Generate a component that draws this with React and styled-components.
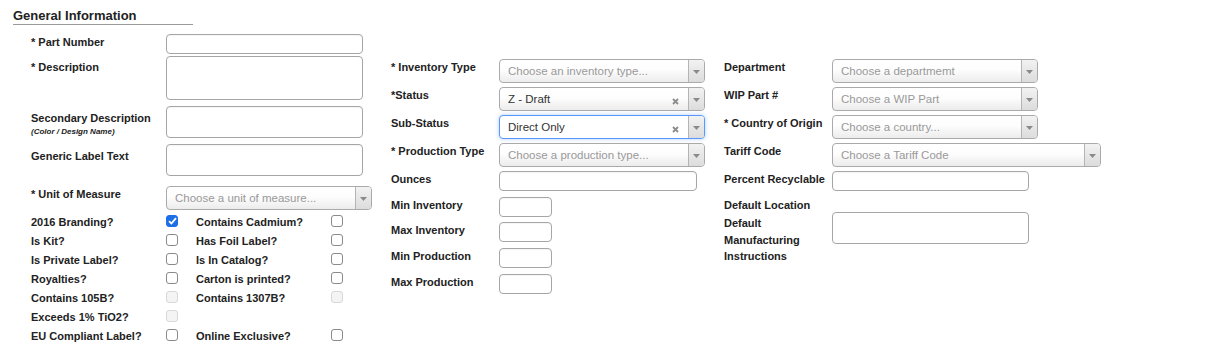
import React from 'react';
import styled, { createGlobalStyle } from 'styled-components';

const GlobalStyle = createGlobalStyle`
  body {
    margin: 0;
    background: #fff;
    font-family: "Liberation Sans", Arial, sans-serif;
    color: #222;
  }
`;

const Wrapper = styled.section`
  padding: 8px 0 0 13px;
`;

const Title = styled.h3`
  margin: 0;
  width: 180px;
  padding-bottom: 1px;
  font-size: 13px;
  line-height: 15px;
  font-weight: bold;
  color: #222;
  border-bottom: 1px solid #9a9a9a;
`;

const Columns = styled.div`
  display: flex;
  margin-top: 9px;
`;

const Column = styled.div`
  flex: ${(p) => (p.$w ? 'none' : 1)};
  width: ${(p) => (p.$w ? `${p.$w}px` : 'auto')};
  margin-left: ${(p) => p.$ml || 0}px;
  padding-top: ${(p) => p.$top || 0}px;
`;

const Row = styled.div`
  display: grid;
  grid-template-columns: ${(p) => p.$label}px auto;
  align-items: start;
  margin-bottom: ${(p) => p.$mb ?? 4}px;
`;

const Label = styled.label`
  display: block;
  padding-top: ${(p) => p.$pt || 0}px;
  padding-right: 6px;
  font-size: 11px;
  line-height: ${(p) => p.$lh || 16}px;
  font-weight: bold;
  color: #222;
`;

const SubLabel = styled.span`
  display: block;
  font-size: 8px;
  line-height: 12px;
  font-style: italic;
`;

const TextInput = styled.input`
  display: block;
  box-sizing: border-box;
  width: ${(p) => p.$w}px;
  height: ${(p) => p.$h || 20}px;
  margin: 0;
  border: 1px solid #a6a6a6;
  border-radius: 4px;
  background: #fff;
  box-shadow: inset 0 1px 1px rgba(0, 0, 0, 0.04);
  font: 11px "Liberation Sans", Arial, sans-serif;
  outline: none;
`;

const TextArea = styled.textarea`
  display: block;
  box-sizing: border-box;
  width: ${(p) => p.$w}px;
  height: ${(p) => p.$h}px;
  margin: 0;
  border: 1px solid #a6a6a6;
  border-radius: 4px;
  background: #fff;
  resize: none;
  font: 11px "Liberation Sans", Arial, sans-serif;
  outline: none;
`;

const SelectBox = styled.div`
  display: flex;
  align-items: stretch;
  box-sizing: border-box;
  width: ${(p) => p.$w}px;
  height: 24px;
  border: 1px solid ${(p) => (p.$focus ? '#5897fb' : '#aaa')};
  border-radius: 4px;
  background: ${(p) =>
    p.$focus ? '#fff' : 'linear-gradient(#fff 0%, #fdfdfd 45%, #ececec 100%)'};
  box-shadow: ${(p) => (p.$focus ? '0 0 4px rgba(88, 151, 251, 0.45)' : 'none')};
  overflow: hidden;
`;

const SelectText = styled.span`
  flex: 1;
  padding-left: 8px;
  font-size: 11.5px;
  line-height: 22px;
  color: ${(p) => (p.$placeholder ? '#999' : '#333')};
  white-space: nowrap;
  overflow: hidden;
`;

const ClearBtn = styled.span`
  display: flex;
  align-items: center;
  justify-content: center;
  width: 10px;
  margin-right: 8px;
  padding-top: 4px;
`;

const ArrowBox = styled.span`
  display: flex;
  align-items: center;
  justify-content: center;
  width: 15px;
  padding-top: 2px;
  border-left: 1px solid #b4b4b4;
  background: linear-gradient(#f2f2f2, #dcdcdc);
`;

const CheckGrid = styled.div`
  display: grid;
  grid-template-columns: 135px 30px 135px 14px;
  grid-auto-rows: 19px;
  align-items: center;
  margin-top: 2px;
`;

const CheckLabel = styled.span`
  font-size: 11px;
  line-height: 16px;
  font-weight: bold;
  color: #222;
`;

const Box = styled.span`
  display: flex;
  align-items: center;
  justify-content: center;
  box-sizing: border-box;
  width: 12px;
  height: 12px;
  margin-top: -2px;
  border: 1px solid ${(p) => (p.$checked ? '#1d6fe8' : p.$disabled ? '#d8d8d8' : '#8a8a8a')};
  border-radius: 3px;
  background: ${(p) => (p.$checked ? '#1d6fe8' : p.$disabled ? '#f4f4f4' : '#fff')};
`;

const Select = ({ w, placeholder, value, clearable, focus }) => (
  <SelectBox $w={w} $focus={focus}>
    <SelectText $placeholder={!value}>{value || placeholder}</SelectText>
    {clearable && (
      <ClearBtn>
        <svg width="7" height="7" viewBox="0 0 7 7">
          <path d="M1 1L6 6M6 1L1 6" stroke="#8c8c8c" strokeWidth="1.8" />
        </svg>
      </ClearBtn>
    )}
    <ArrowBox>
      <svg width="7" height="4" viewBox="0 0 7 4">
        <path d="M0 0H7L3.5 4Z" fill="#8a8a8a" />
      </svg>
    </ArrowBox>
  </SelectBox>
);

const Check = ({ checked, disabled }) => (
  <Box $checked={checked} $disabled={disabled}>
    {checked && (
      <svg width="9" height="8" viewBox="0 0 9 8">
        <path d="M1 4.2L3.4 6.5L8 1.2" stroke="#fff" strokeWidth="1.8" fill="none" />
      </svg>
    )}
  </Box>
);

const checks = [
  ['2016 Branding?', { checked: true }, 'Contains Cadmium?', {}],
  ['Is Kit?', {}, 'Has Foil Label?', {}],
  ['Is Private Label?', {}, 'Is In Catalog?', {}],
  ['Royalties?', {}, 'Carton is printed?', {}],
  ['Contains 105B?', { disabled: true }, 'Contains 1307B?', { disabled: true }],
  ['Exceeds 1% TiO2?', { disabled: true }, null, null],
  ['EU Compliant Label?', {}, 'Online Exclusive?', {}],
];

const App = () => {
  return (
    <Wrapper>
      <GlobalStyle />
      <Title>General Information</Title>
      <Columns>
        <Column $w={360} $ml={18}>
          <Row $label={135} $mb={2}>
            <Label>* Part Number</Label>
            <TextInput $w={197} />
          </Row>
          <Row $label={135} $mb={6}>
            <Label $pt={3}>* Description</Label>
            <TextArea $w={197} $h={44} />
          </Row>
          <Row $label={135} $mb={6}>
            <Label $pt={4}>
              Secondary Description
              <SubLabel>(Color / Design Name)</SubLabel>
            </Label>
            <TextInput $w={197} $h={32} />
          </Row>
          <Row $label={135} $mb={10}>
            <Label $pt={4}>Generic Label Text</Label>
            <TextInput $w={197} $h={32} />
          </Row>
          <Row $label={135} $mb={0}>
            <Label>* Unit of Measure</Label>
            <Select w={206} placeholder="Choose a unit of measure..." />
          </Row>
          <CheckGrid>
            {checks.map(([a, ao, b, bo]) => (
              <React.Fragment key={a}>
                <CheckLabel>{a}</CheckLabel>
                <Check {...ao} />
                {b ? <CheckLabel>{b}</CheckLabel> : <span />}
                {b ? <Check {...bo} /> : <span />}
              </React.Fragment>
            ))}
          </CheckGrid>
        </Column>

        <Column $w={333} $top={25}>
          <Row $label={108}>
            <Label>* Inventory Type</Label>
            <Select w={206} placeholder="Choose an inventory type..." />
          </Row>
          <Row $label={108}>
            <Label>*Status</Label>
            <Select w={206} value="Z - Draft" clearable />
          </Row>
          <Row $label={108}>
            <Label>Sub-Status</Label>
            <Select w={206} value="Direct Only" clearable focus />
          </Row>
          <Row $label={108}>
            <Label>* Production Type</Label>
            <Select w={206} placeholder="Choose a production type..." />
          </Row>
          <Row $label={108} $mb={6}>
            <Label>Ounces</Label>
            <TextInput $w={198} />
          </Row>
          <Row $label={108} $mb={5}>
            <Label>Min Inventory</Label>
            <TextInput $w={53} />
          </Row>
          <Row $label={108} $mb={6}>
            <Label>Max Inventory</Label>
            <TextInput $w={53} />
          </Row>
          <Row $label={108} $mb={6}>
            <Label>Min Production</Label>
            <TextInput $w={53} />
          </Row>
          <Row $label={108}>
            <Label>Max Production</Label>
            <TextInput $w={53} />
          </Row>
        </Column>

        <Column $top={25}>
          <Row $label={108}>
            <Label>Department</Label>
            <Select w={206} placeholder="Choose a departmemt" />
          </Row>
          <Row $label={108}>
            <Label>WIP Part #</Label>
            <Select w={206} placeholder="Choose a WIP Part" />
          </Row>
          <Row $label={108}>
            <Label>* Country of Origin</Label>
            <Select w={206} placeholder="Choose a country..." />
          </Row>
          <Row $label={108}>
            <Label>Tariff Code</Label>
            <Select w={269} placeholder="Choose a Tariff Code" />
          </Row>
          <Row $label={108} $mb={6}>
            <Label>Percent Recyclable</Label>
            <TextInput $w={197} />
          </Row>
          <Row $label={108} $mb={-1}>
            <Label>Default Location</Label>
          </Row>
          <Row $label={108}>
            <Label $pt={3} $lh={16.5}>Default Manufacturing Instructions</Label>
            <TextArea $w={197} $h={32} />
          </Row>
        </Column>
      </Columns>
    </Wrapper>
  );
};

export default App;
